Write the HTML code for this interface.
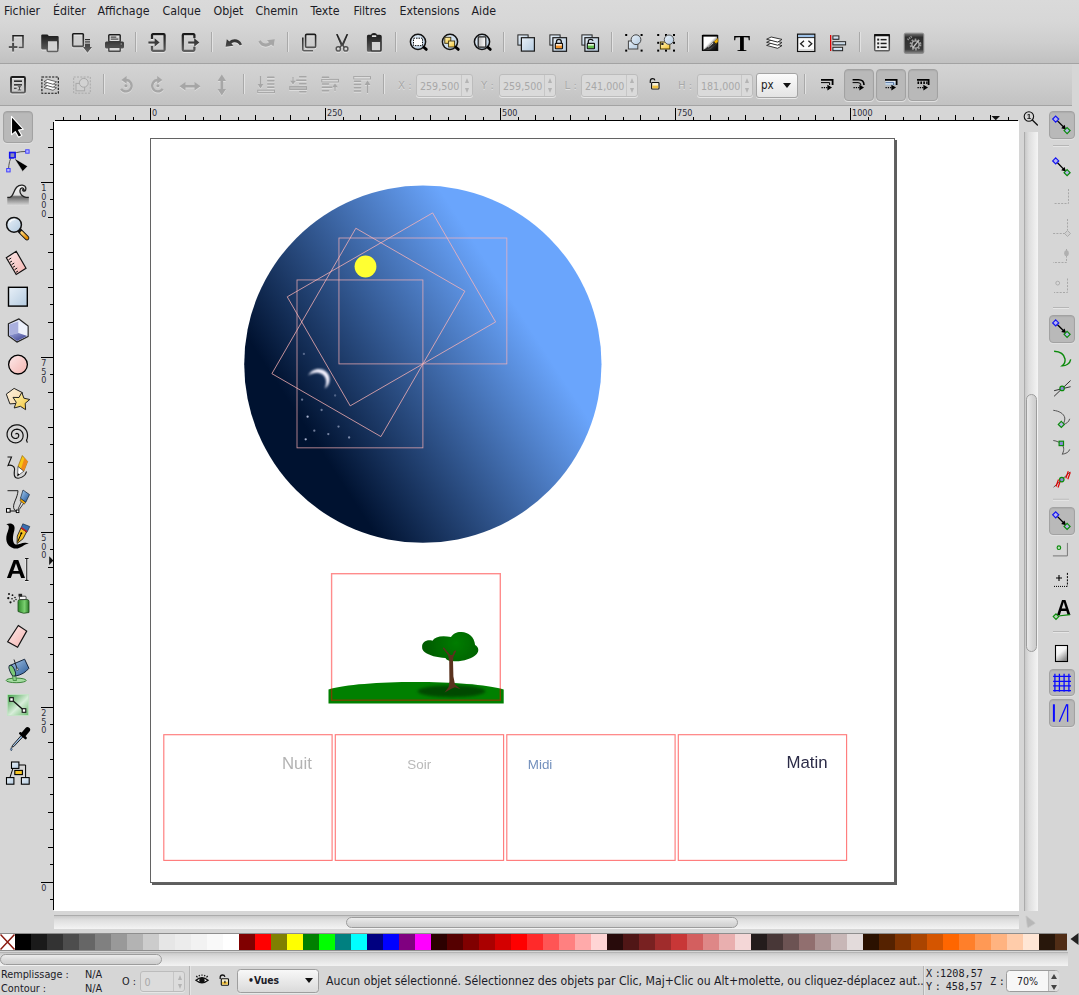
<!DOCTYPE html>
<html lang="fr"><head><meta charset="utf-8"><title>Inkscape</title>
<style>
html,body{margin:0;padding:0}
body{width:1079px;height:995px;overflow:hidden;background:#d6d6d6;position:relative;font-family:"DejaVu Sans Condensed","Liberation Sans","DejaVu Sans",sans-serif;font-size:13px;color:#1f1f2a}
.abs{position:absolute}
#menubar{position:absolute;left:0;top:0;width:1079px;height:22px}
#menubar span{position:absolute;top:2.8px;margin-left:-0.5px;line-height:16px;font-size:12.3px;white-space:nowrap;color:#1c1c26}
#tb1{position:absolute;left:0;top:0;width:1079px;height:63px;background:linear-gradient(#dadada,#d7d7d7 35%,#cecece 68%,#c1c1c1)}
#tb1b{position:absolute;left:0;top:63px;width:1079px;height:1px;background:#a3a3a3}
#tb2{position:absolute;left:0;top:64px;width:1072px;height:41px;background:linear-gradient(#d4d4d4,#cccccc 50%,#c2c2c2)}
#tb2b{position:absolute;left:0;top:105px;width:1072px;height:1px;background:#a3a3a3}
.sep{position:absolute;width:1px;height:20px;background:#a9a9a9;box-shadow:1px 0 0 #e2e2e2}
#canvas{position:absolute;left:54px;top:121px;width:965px;height:790px;background:#fff;overflow:hidden}
#hruler{position:absolute;left:54px;top:106px;width:965px;height:15px;overflow:hidden}
#vruler{position:absolute;left:40px;top:121px;width:14px;height:790px;overflow:hidden}
svg{position:absolute;overflow:visible}
</style></head>
<body>
<div id="tb1"></div><div id="tb1b"></div><div id="tb2"></div><div id="tb2b"></div>
<div id="menubar"><span style="left:4.5px">Fichier</span><span style="left:53.5px">Éditer</span><span style="left:98.0px">Affichage</span><span style="left:163.0px">Calque</span><span style="left:214.0px">Objet</span><span style="left:256.0px">Chemin</span><span style="left:311.0px">Texte</span><span style="left:354.0px">Filtres</span><span style="left:400.0px">Extensions</span><span style="left:472.0px">Aide</span></div>
<div class="sep" style="left:135px;top:32px"></div><div class="sep" style="left:211px;top:32px"></div><div class="sep" style="left:287px;top:32px"></div><div class="sep" style="left:395px;top:32px"></div><div class="sep" style="left:503px;top:32px"></div><div class="sep" style="left:611px;top:32px"></div><div class="sep" style="left:687px;top:32px"></div><div class="sep" style="left:859px;top:32px"></div><div class="sep" style="left:103px;top:74px"></div><div class="sep" style="left:243px;top:74px"></div><div class="sep" style="left:383px;top:74px"></div><div class="sep" style="left:804px;top:74px"></div>
<div id="hruler"><svg width="965" height="15" style="left:0;top:0"><rect x="1" y="14" width="963" height="1" fill="#000"/><rect x="9" y="11" width="1" height="3" fill="#000"/><rect x="26" y="9" width="1" height="5" fill="#000"/><rect x="44" y="11" width="1" height="3" fill="#000"/><rect x="61" y="9" width="1" height="5" fill="#000"/><rect x="79" y="11" width="1" height="3" fill="#000"/><rect x="96" y="2" width="1" height="12" fill="#000"/><rect x="114" y="11" width="1" height="3" fill="#000"/><rect x="131" y="9" width="1" height="5" fill="#000"/><rect x="149" y="11" width="1" height="3" fill="#000"/><rect x="166" y="9" width="1" height="5" fill="#000"/><rect x="184" y="11" width="1" height="3" fill="#000"/><rect x="201" y="9" width="1" height="5" fill="#000"/><rect x="219" y="11" width="1" height="3" fill="#000"/><rect x="236" y="9" width="1" height="5" fill="#000"/><rect x="254" y="11" width="1" height="3" fill="#000"/><rect x="271" y="2" width="1" height="12" fill="#000"/><rect x="289" y="11" width="1" height="3" fill="#000"/><rect x="306" y="9" width="1" height="5" fill="#000"/><rect x="324" y="11" width="1" height="3" fill="#000"/><rect x="341" y="9" width="1" height="5" fill="#000"/><rect x="359" y="11" width="1" height="3" fill="#000"/><rect x="376" y="9" width="1" height="5" fill="#000"/><rect x="394" y="11" width="1" height="3" fill="#000"/><rect x="411" y="9" width="1" height="5" fill="#000"/><rect x="429" y="11" width="1" height="3" fill="#000"/><rect x="446" y="2" width="1" height="12" fill="#000"/><rect x="464" y="11" width="1" height="3" fill="#000"/><rect x="481" y="9" width="1" height="5" fill="#000"/><rect x="499" y="11" width="1" height="3" fill="#000"/><rect x="516" y="9" width="1" height="5" fill="#000"/><rect x="534" y="11" width="1" height="3" fill="#000"/><rect x="551" y="9" width="1" height="5" fill="#000"/><rect x="569" y="11" width="1" height="3" fill="#000"/><rect x="586" y="9" width="1" height="5" fill="#000"/><rect x="604" y="11" width="1" height="3" fill="#000"/><rect x="621" y="2" width="1" height="12" fill="#000"/><rect x="639" y="11" width="1" height="3" fill="#000"/><rect x="656" y="9" width="1" height="5" fill="#000"/><rect x="674" y="11" width="1" height="3" fill="#000"/><rect x="691" y="9" width="1" height="5" fill="#000"/><rect x="709" y="11" width="1" height="3" fill="#000"/><rect x="726" y="9" width="1" height="5" fill="#000"/><rect x="744" y="11" width="1" height="3" fill="#000"/><rect x="761" y="9" width="1" height="5" fill="#000"/><rect x="779" y="11" width="1" height="3" fill="#000"/><rect x="796" y="2" width="1" height="12" fill="#000"/><rect x="814" y="11" width="1" height="3" fill="#000"/><rect x="831" y="9" width="1" height="5" fill="#000"/><rect x="849" y="11" width="1" height="3" fill="#000"/><rect x="866" y="9" width="1" height="5" fill="#000"/><rect x="884" y="11" width="1" height="3" fill="#000"/><rect x="901" y="9" width="1" height="5" fill="#000"/><rect x="919" y="11" width="1" height="3" fill="#000"/><rect x="936" y="9" width="1" height="5" fill="#000"/><rect x="954" y="11" width="1" height="3" fill="#000"/><text x="98" y="10.2" font-size="9" fill="#2e2e3a" font-family="DejaVu Sans Condensed,Liberation Sans,DejaVu Sans,sans-serif">0</text><text x="273" y="10.2" font-size="9" fill="#2e2e3a" font-family="DejaVu Sans Condensed,Liberation Sans,DejaVu Sans,sans-serif">250</text><text x="448" y="10.2" font-size="9" fill="#2e2e3a" font-family="DejaVu Sans Condensed,Liberation Sans,DejaVu Sans,sans-serif">500</text><text x="623" y="10.2" font-size="9" fill="#2e2e3a" font-family="DejaVu Sans Condensed,Liberation Sans,DejaVu Sans,sans-serif">750</text><text x="798" y="10.2" font-size="9" fill="#2e2e3a" font-family="DejaVu Sans Condensed,Liberation Sans,DejaVu Sans,sans-serif">1000</text><path d="M937.5 10H946L941.750 14.200Z" fill="#111"/></svg></div>
<div id="vruler"><svg width="14" height="790" style="left:0;top:0"><rect x="13" y="1" width="1" height="788" fill="#000"/><rect x="10" y="778" width="3" height="1" fill="#000"/><rect x="1" y="761" width="12" height="1" fill="#000"/><rect x="10" y="743" width="3" height="1" fill="#000"/><rect x="8" y="726" width="5" height="1" fill="#000"/><rect x="10" y="708" width="3" height="1" fill="#000"/><rect x="8" y="691" width="5" height="1" fill="#000"/><rect x="10" y="673" width="3" height="1" fill="#000"/><rect x="8" y="656" width="5" height="1" fill="#000"/><rect x="10" y="638" width="3" height="1" fill="#000"/><rect x="8" y="621" width="5" height="1" fill="#000"/><rect x="10" y="603" width="3" height="1" fill="#000"/><rect x="1" y="586" width="12" height="1" fill="#000"/><rect x="10" y="568" width="3" height="1" fill="#000"/><rect x="8" y="551" width="5" height="1" fill="#000"/><rect x="10" y="533" width="3" height="1" fill="#000"/><rect x="8" y="516" width="5" height="1" fill="#000"/><rect x="10" y="498" width="3" height="1" fill="#000"/><rect x="8" y="481" width="5" height="1" fill="#000"/><rect x="10" y="463" width="3" height="1" fill="#000"/><rect x="8" y="446" width="5" height="1" fill="#000"/><rect x="10" y="428" width="3" height="1" fill="#000"/><rect x="1" y="411" width="12" height="1" fill="#000"/><rect x="10" y="393" width="3" height="1" fill="#000"/><rect x="8" y="376" width="5" height="1" fill="#000"/><rect x="10" y="358" width="3" height="1" fill="#000"/><rect x="8" y="341" width="5" height="1" fill="#000"/><rect x="10" y="323" width="3" height="1" fill="#000"/><rect x="8" y="306" width="5" height="1" fill="#000"/><rect x="10" y="288" width="3" height="1" fill="#000"/><rect x="8" y="271" width="5" height="1" fill="#000"/><rect x="10" y="253" width="3" height="1" fill="#000"/><rect x="1" y="236" width="12" height="1" fill="#000"/><rect x="10" y="218" width="3" height="1" fill="#000"/><rect x="8" y="201" width="5" height="1" fill="#000"/><rect x="10" y="183" width="3" height="1" fill="#000"/><rect x="8" y="166" width="5" height="1" fill="#000"/><rect x="10" y="148" width="3" height="1" fill="#000"/><rect x="8" y="131" width="5" height="1" fill="#000"/><rect x="10" y="113" width="3" height="1" fill="#000"/><rect x="8" y="96" width="5" height="1" fill="#000"/><rect x="10" y="78" width="3" height="1" fill="#000"/><rect x="1" y="61" width="12" height="1" fill="#000"/><rect x="10" y="43" width="3" height="1" fill="#000"/><rect x="8" y="26" width="5" height="1" fill="#000"/><rect x="10" y="8" width="3" height="1" fill="#000"/><text x="1.2" y="769.6" font-size="9" fill="#2e2e3a" font-family="DejaVu Sans Condensed,Liberation Sans,DejaVu Sans,sans-serif">0</text><text x="1.2" y="594.6" font-size="9" fill="#2e2e3a" font-family="DejaVu Sans Condensed,Liberation Sans,DejaVu Sans,sans-serif">2</text><text x="1.2" y="603.5" font-size="9" fill="#2e2e3a" font-family="DejaVu Sans Condensed,Liberation Sans,DejaVu Sans,sans-serif">5</text><text x="1.2" y="612.4" font-size="9" fill="#2e2e3a" font-family="DejaVu Sans Condensed,Liberation Sans,DejaVu Sans,sans-serif">0</text><text x="1.2" y="419.6" font-size="9" fill="#2e2e3a" font-family="DejaVu Sans Condensed,Liberation Sans,DejaVu Sans,sans-serif">5</text><text x="1.2" y="428.5" font-size="9" fill="#2e2e3a" font-family="DejaVu Sans Condensed,Liberation Sans,DejaVu Sans,sans-serif">0</text><text x="1.2" y="437.4" font-size="9" fill="#2e2e3a" font-family="DejaVu Sans Condensed,Liberation Sans,DejaVu Sans,sans-serif">0</text><text x="1.2" y="244.6" font-size="9" fill="#2e2e3a" font-family="DejaVu Sans Condensed,Liberation Sans,DejaVu Sans,sans-serif">7</text><text x="1.2" y="253.5" font-size="9" fill="#2e2e3a" font-family="DejaVu Sans Condensed,Liberation Sans,DejaVu Sans,sans-serif">5</text><text x="1.2" y="262.4" font-size="9" fill="#2e2e3a" font-family="DejaVu Sans Condensed,Liberation Sans,DejaVu Sans,sans-serif">0</text><text x="1.2" y="69.6" font-size="9" fill="#2e2e3a" font-family="DejaVu Sans Condensed,Liberation Sans,DejaVu Sans,sans-serif">1</text><text x="1.2" y="78.5" font-size="9" fill="#2e2e3a" font-family="DejaVu Sans Condensed,Liberation Sans,DejaVu Sans,sans-serif">0</text><text x="1.2" y="87.4" font-size="9" fill="#2e2e3a" font-family="DejaVu Sans Condensed,Liberation Sans,DejaVu Sans,sans-serif">0</text><text x="1.2" y="96.3" font-size="9" fill="#2e2e3a" font-family="DejaVu Sans Condensed,Liberation Sans,DejaVu Sans,sans-serif">0</text><path d="M9.200 435.200L13.400 439.600L9.200 444Z" fill="#111"/></svg></div>
<div id="canvas"><svg width="965" height="790" style="left:0;top:0" viewBox="54 121 965 790">
<defs>
<linearGradient id="sky" gradientUnits="userSpaceOnUse" x1="311.6" y1="436.4" x2="514.6" y2="304.5"><stop offset="0" stop-color="#001230"/><stop offset="1" stop-color="#6aa5fc"/></linearGradient>
<filter id="b1" x="-30%" y="-30%" width="160%" height="160%"><feGaussianBlur stdDeviation="0.7"/></filter>
<filter id="b2" x="-30%" y="-30%" width="160%" height="160%"><feGaussianBlur stdDeviation="0.95"/></filter>
<filter id="b05" x="-50%" y="-50%" width="200%" height="200%"><feGaussianBlur stdDeviation="0.5"/></filter>
<filter id="b3" x="-30%" y="-60%" width="160%" height="220%"><feGaussianBlur stdDeviation="1.6"/></filter>
<radialGradient id="crown" gradientUnits="userSpaceOnUse" cx="456" cy="643" r="30"><stop offset="0" stop-color="#007c00"/><stop offset="1" stop-color="#005c00"/></radialGradient>
</defs>
<rect x="152" y="883" width="745" height="2" fill="#5e5e5e"/><rect x="895" y="140" width="2" height="745" fill="#5e5e5e"/>
<rect x="150.5" y="138.5" width="744" height="744" fill="#fff" stroke="#636363" stroke-width="1"/>
<circle cx="422.85" cy="364.2" r="178.65" fill="url(#sky)"/>
<rect x="338.95" y="238.00" width="167.90" height="125.90" fill="none" stroke="#ffb4b6" stroke-opacity="0.8" stroke-width="0.85" transform="rotate(0 422.90 363.90)"/>
<rect x="338.95" y="238.00" width="167.90" height="125.90" fill="none" stroke="#ffb4b6" stroke-opacity="0.8" stroke-width="0.85" transform="rotate(-30 422.90 363.90)"/>
<rect x="338.95" y="238.00" width="167.90" height="125.90" fill="none" stroke="#ffb4b6" stroke-opacity="0.8" stroke-width="0.85" transform="rotate(-60 422.90 363.90)"/>
<rect x="338.95" y="238.00" width="167.90" height="125.90" fill="none" stroke="#ffb4b6" stroke-opacity="0.8" stroke-width="0.85" transform="rotate(-90 422.90 363.90)"/>
<circle cx="365.5" cy="266.5" r="10.9" fill="#ffff33" filter="url(#b05)"/>
<path d="M308.2 375.6 C311 369.5 320 366.5 326 371.5 C331.5 376 330.5 385 324.8 388.6 C327.2 383 326.6 377.600 322.600 374.600 C318.5 371.8 312.5 372.6 308.2 375.6 Z" fill="#f4f2ff" filter="url(#b2)"/>
<circle cx="303.9" cy="353.9" r="1.15" fill="#dfe4ff" fill-opacity="0.34" filter="url(#b05)"/>
<circle cx="335.1" cy="395.5" r="1.15" fill="#dfe4ff" fill-opacity="0.30" filter="url(#b05)"/>
<circle cx="302.1" cy="399.7" r="1.15" fill="#dfe4ff" fill-opacity="0.45" filter="url(#b05)"/>
<circle cx="321.6" cy="410.0" r="1.15" fill="#dfe4ff" fill-opacity="0.45" filter="url(#b05)"/>
<circle cx="307.6" cy="416.7" r="1.15" fill="#dfe4ff" fill-opacity="0.75" filter="url(#b05)"/>
<circle cx="338.5" cy="426.6" r="1.15" fill="#dfe4ff" fill-opacity="0.49" filter="url(#b05)"/>
<circle cx="314.3" cy="430.7" r="1.15" fill="#dfe4ff" fill-opacity="0.49" filter="url(#b05)"/>
<circle cx="328.3" cy="434.1" r="1.15" fill="#dfe4ff" fill-opacity="0.52" filter="url(#b05)"/>
<circle cx="349.1" cy="437.5" r="1.15" fill="#dfe4ff" fill-opacity="0.52" filter="url(#b05)"/>
<circle cx="305.7" cy="439.3" r="1.15" fill="#dfe4ff" fill-opacity="0.75" filter="url(#b05)"/>
<path d="M328.5 703.5 L328.5 689.5 C360 679.5 470 679.5 503.7 689.5 L503.7 703.5 Z" fill="#008000" filter="url(#b1)"/>
<ellipse cx="451.5" cy="691.3" rx="34" ry="6" fill="#004a00" filter="url(#b3)"/>
<path d="M443.4 648.3 L448.8 654.9 L452.6 654.9 L454 651.2 L455.6 651 L453.4 655.2 L453 660.4 L453.4 676.5 L455 684.5 L460.6 689.3 L455 687.3 L451.8 688.5 L444.6 692.5 L448.6 686.9 L449.4 681.3 L449.2 660.4 L448.2 655.2 Z" fill="#5a321e"/>
<path d="M422.1 646.7 C422 642 427 639 432.5 640.7 C435 637 441 635.2 451 637.1 C453 633.5 458 631.6 461.4 632.1 C468 632 474.5 637 475.1 645.1 C478.5 646.5 479.5 651.5 476.7 653.9 C473 658.5 462 661.5 455 661.2 C450 661.3 446.5 660.5 445.4 658 C437 657.5 429 655.5 424.5 652 C422.6 650.5 422 648.5 422.1 646.7 Z" fill="url(#crown)" filter="url(#b05)"/>
<path d="M443.4 648.3 L448.8 654.9 L452.6 654.9 L454 651.2 L455.6 651 L453.4 655.2 L453 661 L449.2 661 L448.2 655.2 Z" fill="#5a321e"/>
<path d="M443.6 648.3L449.8 655.8M455.3 651.2L452.7 656.4" stroke="#5a321e" stroke-width="1.5" stroke-linecap="round" fill="none"/>
<rect x="331.6" y="573.7" width="168.7" height="126.5" fill="none" stroke="#ff0000" stroke-opacity="0.45" stroke-width="1.4"/>
<rect x="163.8" y="734.7" width="168.3" height="125.7" fill="none" stroke="#ff0000" stroke-opacity="0.52" stroke-width="1.15"/>
<rect x="335.3" y="734.7" width="168.3" height="125.7" fill="none" stroke="#ff0000" stroke-opacity="0.52" stroke-width="1.15"/>
<rect x="506.8" y="734.7" width="168.3" height="125.7" fill="none" stroke="#ff0000" stroke-opacity="0.52" stroke-width="1.15"/>
<rect x="678.3" y="734.7" width="168.3" height="125.7" fill="none" stroke="#ff0000" stroke-opacity="0.52" stroke-width="1.15"/>
<g opacity=".999">
<text x="311.8" y="768.6" text-anchor="end" font-size="16.8" fill="#b3b3b3" font-family="Liberation Sans,Arial,sans-serif">Nuit</text>
<text x="407.3" y="768.5" font-size="13.4" fill="#b9b9b9" font-family="Liberation Sans,Arial,sans-serif">Soir</text>
<text x="527.8" y="768.5" font-size="13.4" fill="#7390bd" font-family="Liberation Sans,Arial,sans-serif">Midi</text>
<text x="827.6" y="768.4" text-anchor="end" font-size="16.8" fill="#2b2b47" font-family="Liberation Sans,Arial,sans-serif">Matin</text>
</g>
</svg></div>
<svg width="0" height="0" style="left:0;top:0"><defs>
<linearGradient id="sym" gradientUnits="userSpaceOnUse" x1="0" y1="1" x2="0" y2="21"><stop offset="0" stop-color="#141414"/><stop offset="1" stop-color="#686868"/></linearGradient>
<linearGradient id="lb" x1="0" y1="0" x2="1" y2="1"><stop offset="0" stop-color="#e8f0f8"/><stop offset="1" stop-color="#b4cbe0"/></linearGradient>
<linearGradient id="lbv" x1="0" y1="0" x2="0" y2="1"><stop offset="0" stop-color="#f4f8fc"/><stop offset="1" stop-color="#a9c4dd"/></linearGradient>
<linearGradient id="pk" x1="0" y1="0" x2="1" y2="1"><stop offset="0" stop-color="#fdeaea"/><stop offset="1" stop-color="#f4b4b0"/></linearGradient>
<linearGradient id="yl" x1="0" y1="0" x2="1" y2="1"><stop offset="0" stop-color="#fff6c0"/><stop offset="1" stop-color="#f2c230"/></linearGradient>
<linearGradient id="pg" x1="0" y1="0" x2="1" y2="0"><stop offset="0" stop-color="#b8b8b8"/><stop offset="1" stop-color="#ffffff"/></linearGradient>
<linearGradient id="gr" x1="0" y1="0" x2="1" y2="1"><stop offset="0" stop-color="#e4f2e0"/><stop offset="1" stop-color="#3f9a3a"/></linearGradient>
</defs></svg>
<svg style="left:7px;top:32px" width="22" height="24" viewBox="0 0 22 24"><g transform="translate(0,1)" fill="#fff" stroke="#fff" opacity="0.55"><path d="M6 9.5V3.75H16V15.6H11.8" fill="none" stroke-width="1.5"/><rect x="1.8" y="14.1" width="8.6" height="2" stroke="none"/><rect x="5.1" y="10.8" width="2" height="8.8" stroke="none"/></g><g fill="url(#sym)" stroke="url(#sym)"><path d="M6 9.5V3.75H16V15.6H11.8" fill="none" stroke-width="1.5"/><rect x="1.8" y="14.1" width="8.6" height="2" stroke="none"/><rect x="5.1" y="10.8" width="2" height="8.8" stroke="none"/></g></svg>
<svg style="left:39px;top:32px" width="22" height="24" viewBox="0 0 22 24"><g transform="translate(0,1)" fill="#fff" stroke="#fff" opacity="0.55"><path d="M2.2 3.600Q2.2 2.400 3.4 2.400H8Q9 2.400 9.3 3.200L9.6 4H18.4Q19.7 4 19.7 5.3V16.3Q19.7 17.6 18.4 17.6H3.5Q2.2 17.6 2.2 16.3Z" stroke="none"/></g><g fill="url(#sym)" stroke="url(#sym)"><path d="M2.2 3.600Q2.2 2.400 3.4 2.400H8Q9 2.400 9.3 3.200L9.6 4H18.4Q19.7 4 19.7 5.3V16.3Q19.7 17.6 18.4 17.6H3.5Q2.2 17.6 2.2 16.3Z" stroke="none"/></g></svg>
<svg style="left:39px;top:32px" width="22" height="24" viewBox="0 0 22 24"><rect x="8.2" y="9.3" width="10.6" height="11" rx="1" fill="#e9e9e9" opacity=".6"/><rect x="8.2" y="8.5" width="10.6" height="11" rx="1" fill="#d2d2d2" stroke="url(#sym)" stroke-width="1.5"/></svg>
<svg style="left:71px;top:32px" width="22" height="24" viewBox="0 0 22 24"><g transform="translate(0,1)" fill="#fff" stroke="#fff" opacity="0.55"><rect x="1.7" y="1.8" width="10.6" height="12.6" rx=".8" fill="none" stroke-width="1.6"/><rect x="14" y="7" width="5" height="1.3" stroke="none"/><rect x="14" y="9.3" width="5" height="1.3" stroke="none"/><rect x="14" y="11.6" width="5" height="3.6" stroke="none"/><path d="M12 15H21L16.5 20.8Z" stroke="none"/></g><g fill="url(#sym)" stroke="url(#sym)"><rect x="1.7" y="1.8" width="10.6" height="12.6" rx=".8" fill="none" stroke-width="1.6"/><rect x="14" y="7" width="5" height="1.3" stroke="none"/><rect x="14" y="9.3" width="5" height="1.3" stroke="none"/><rect x="14" y="11.6" width="5" height="3.6" stroke="none"/><path d="M12 15H21L16.5 20.8Z" stroke="none"/></g></svg>
<svg style="left:103px;top:32px" width="22" height="24" viewBox="0 0 22 24"><g transform="translate(0,1)" fill="#fff" stroke="#fff" opacity="0.55"><rect x="5.8" y="2.7" width="11.4" height="7" rx=".8" fill="none" stroke-width="1.5"/><rect x="7.8" y="4.6" width="5.5" height="1" stroke="none"/><rect x="7.8" y="6.6" width="7.5" height="1" stroke="none"/><path d="M3.5 9.5H19.5Q21 9.500 21 11V15Q21 16.500 19.500 16.500H3.500Q2 16.500 2 15V11Q2 9.500 3.500 9.500Z" stroke="none"/></g><g fill="url(#sym)" stroke="url(#sym)"><rect x="5.8" y="2.7" width="11.4" height="7" rx=".8" fill="none" stroke-width="1.5"/><rect x="7.8" y="4.6" width="5.5" height="1" stroke="none"/><rect x="7.8" y="6.6" width="7.5" height="1" stroke="none"/><path d="M3.5 9.5H19.5Q21 9.500 21 11V15Q21 16.500 19.500 16.500H3.500Q2 16.500 2 15V11Q2 9.500 3.500 9.500Z" stroke="none"/></g></svg>
<svg style="left:103px;top:32px" width="22" height="24" viewBox="0 0 22 24"><rect x="5.8" y="15.3" width="11.4" height="4" rx=".6" fill="#d8d8d8" stroke="#4a4a4a" stroke-width="1.4"/><rect x="17.6" y="11.4" width="1.4" height="1.2" fill="#9a9a9a"/></svg>
<svg style="left:147px;top:32px" width="22" height="24" viewBox="0 0 22 24"><g transform="translate(0,1)" fill="#fff" stroke="#fff" opacity="0.55"><path d="M5 7V3.200Q5 2.200 6 2.200H16.6Q17.6 2.200 17.6 3.200V17.800Q17.6 18.800 16.600 18.800H6Q5 18.800 5 17.800V14" fill="none" stroke-width="2.3"/><rect x="1.400" y="9.500" width="7" height="2.100" stroke="none"/><path d="M7.600 6.300L12.600 10.500L7.600 14.800Z" stroke="none"/></g><g fill="url(#sym)" stroke="url(#sym)"><path d="M5 7V3.200Q5 2.200 6 2.200H16.6Q17.6 2.200 17.6 3.200V17.800Q17.6 18.800 16.600 18.800H6Q5 18.800 5 17.800V14" fill="none" stroke-width="2.3"/><rect x="1.400" y="9.500" width="7" height="2.100" stroke="none"/><path d="M7.600 6.300L12.600 10.500L7.600 14.800Z" stroke="none"/></g></svg>
<svg style="left:179px;top:32px" width="22" height="24" viewBox="0 0 22 24"><g transform="translate(0,1)" fill="#fff" stroke="#fff" opacity="0.55"><path d="M15.400 6.300V3.200Q15.400 2.200 14.400 2.200H4.800Q3.800 2.200 3.800 3.200V17.800Q3.800 18.800 4.800 18.800H14.400Q15.400 18.800 15.400 17.800V14.700" fill="none" stroke-width="2.3"/><rect x="9.200" y="9.500" width="7" height="2.100" stroke="none"/><path d="M15.200 6.300L20.400 10.500L15.200 14.800Z" stroke="none"/></g><g fill="url(#sym)" stroke="url(#sym)"><path d="M15.400 6.300V3.200Q15.400 2.200 14.400 2.200H4.800Q3.800 2.200 3.800 3.200V17.800Q3.800 18.800 4.800 18.800H14.400Q15.400 18.800 15.400 17.800V14.700" fill="none" stroke-width="2.3"/><rect x="9.200" y="9.500" width="7" height="2.100" stroke="none"/><path d="M15.200 6.300L20.400 10.500L15.200 14.800Z" stroke="none"/></g></svg>
<svg style="left:223px;top:32px" width="22" height="24" viewBox="0 0 22 24"><g transform="translate(0,1)" fill="#fff" stroke="#fff" opacity="0.55"><path d="M2.600 14.700L3.800 7.300L6.300 9.400C10 6 16.500 6.400 19 12.400L16.800 13.600C14.500 9.800 10.800 9.600 8.400 11.600L10.400 13.700Z" stroke="none"/></g><g fill="url(#sym)" stroke="url(#sym)"><path d="M2.600 14.700L3.800 7.300L6.300 9.400C10 6 16.500 6.400 19 12.400L16.800 13.600C14.500 9.800 10.800 9.600 8.400 11.600L10.400 13.700Z" stroke="none"/></g></svg>
<svg style="left:255px;top:32px" width="22" height="24" viewBox="0 0 22 24"><g transform="translate(0,1)" fill="#e6e6e6" stroke="#e6e6e6" opacity="0.7"><path d="M19.800 7.200L18.600 14.600L16.100 12.500C12.400 15.900 5.900 15.500 3.400 9.500L5.600 8.300C7.900 12.100 11.600 12.300 14 10.300L12 8.200Z" stroke="none"/></g><g fill="#a6a6a6" stroke="#a6a6a6"><path d="M19.800 7.200L18.600 14.600L16.100 12.500C12.400 15.900 5.900 15.500 3.400 9.500L5.600 8.300C7.900 12.100 11.600 12.300 14 10.300L12 8.200Z" stroke="none"/></g></svg>
<svg style="left:299px;top:32px" width="22" height="24" viewBox="0 0 22 24"><g transform="translate(0,1)" fill="#fff" stroke="#fff" opacity="0.55"><rect x="6.600" y="2.400" width="10" height="13" rx="1.200" fill="none" stroke-width="1.600"/><path d="M3.800 5.500V17.600Q3.800 18.800 5 18.800H14" fill="none" stroke-width="1.600"/></g><g fill="url(#sym)" stroke="url(#sym)"><rect x="6.600" y="2.400" width="10" height="13" rx="1.200" fill="none" stroke-width="1.600"/><path d="M3.800 5.500V17.600Q3.800 18.800 5 18.800H14" fill="none" stroke-width="1.600"/></g></svg>
<svg style="left:331px;top:32px" width="22" height="24" viewBox="0 0 22 24"><g transform="translate(0,1)" fill="#fff" stroke="#fff" opacity="0.55"><path d="M5 2.300L6.600 2L11.200 11.200L15.600 2L17.200 2.300L12.700 13.300L14.200 15.400L12.600 16L11.100 13.800L9.600 16L8 15.400L9.600 13.300Z" stroke="none"/><circle cx="7.300" cy="16.900" r="2.100" fill="none" stroke-width="1.500"/><circle cx="14.800" cy="16.900" r="2.100" fill="none" stroke-width="1.500"/></g><g fill="url(#sym)" stroke="url(#sym)"><path d="M5 2.300L6.600 2L11.200 11.200L15.600 2L17.200 2.300L12.700 13.300L14.200 15.400L12.600 16L11.100 13.800L9.600 16L8 15.400L9.600 13.300Z" stroke="none"/><circle cx="7.300" cy="16.900" r="2.100" fill="none" stroke-width="1.500"/><circle cx="14.800" cy="16.900" r="2.100" fill="none" stroke-width="1.500"/></g></svg>
<svg style="left:363px;top:32px" width="22" height="24" viewBox="0 0 22 24"><g transform="translate(0,1)" fill="#fff" stroke="#fff" opacity="0.55"><path d="M5.200 2.800H8Q8.300 1 11 1Q13.700 1 14 2.800H16.800Q18.800 2.800 18.800 4.800V18.400Q18.800 19.700 17.500 19.700H5.200Q3.900 19.700 3.900 18.400V4.800Q3.900 2.800 5.200 2.800Z" stroke="none"/></g><g fill="url(#sym)" stroke="url(#sym)"><path d="M5.200 2.800H8Q8.300 1 11 1Q13.700 1 14 2.800H16.800Q18.800 2.800 18.800 4.800V18.400Q18.800 19.700 17.500 19.700H5.200Q3.900 19.700 3.900 18.400V4.800Q3.900 2.800 5.200 2.800Z" stroke="none"/></g></svg>
<svg style="left:363px;top:32px" width="22" height="24" viewBox="0 0 22 24"><rect x="8.900" y="3.300" width="4.400" height="1.700" rx=".6" fill="#e0e0e0"/><rect x="8.200" y="9.300" width="9.600" height="9.600" rx=".8" fill="#d4d4d4" stroke="#3a3a3a" stroke-width="1.300"/></svg>
<svg style="left:407px;top:32px" width="24" height="24" viewBox="0 0 24 24"><circle cx="11" cy="9.800" r="7.600" fill="url(#lb)" stroke="#111" stroke-width="1.500"/><rect x="6.500" y="6.200" width="9" height="7.400" fill="#fff" stroke="#111" stroke-width="1" stroke-dasharray="1.500 1"/><path d="M16.800 15.200L19.300 17.400" stroke="#000" stroke-width="2.800" stroke-linecap="round"/></svg>
<svg style="left:439px;top:32px" width="24" height="24" viewBox="0 0 24 24"><circle cx="11" cy="9.800" r="7.600" fill="url(#lb)" stroke="#111" stroke-width="1.500"/><rect x="5.800" y="5.300" width="6" height="6" fill="url(#yl)" stroke="#3a3010" stroke-width=".9"/><rect x="9.600" y="9" width="6" height="6" fill="url(#yl)" stroke="#3a3010" stroke-width=".9"/><path d="M16.800 15.200L19.300 17.400" stroke="#000" stroke-width="2.800" stroke-linecap="round"/></svg>
<svg style="left:471px;top:32px" width="24" height="24" viewBox="0 0 24 24"><circle cx="11" cy="9.800" r="7.600" fill="url(#lb)" stroke="#111" stroke-width="1.500"/><rect x="7.200" y="4.800" width="7.600" height="10.400" rx=".6" fill="url(#pg)" stroke="#222" stroke-width="1.200"/><path d="M16.800 15.200L19.300 17.400" stroke="#000" stroke-width="2.800" stroke-linecap="round"/></svg>
<svg style="left:515px;top:32px" width="22" height="24" viewBox="0 0 22 24"><rect x="2.900" y="2.900" width="10.200" height="10.200" fill="url(#lb)" stroke="#222" stroke-width="1"/><rect x="6.400" y="5.700" width="13" height="13.400" fill="url(#lb)" stroke="#1a1a1a" stroke-width="1.200"/></svg>
<svg style="left:546.5px;top:32px" width="22" height="24" viewBox="0 0 22 24"><rect x="2.900" y="2.900" width="10.200" height="10.200" fill="url(#lb)" stroke="#222" stroke-width="1"/><rect x="5.900" y="5.700" width="13.600" height="13.600" fill="url(#lb)" stroke="#1a1a1a" stroke-width="1.200"/><path d="M9.500 11.600V9.600Q9.500 7.300 11.900 7.300Q14.300 7.300 14.300 9.600V11.600" fill="none" stroke="#111" stroke-width="1.300"/><rect x="8.300" y="11.400" width="7.200" height="5.400" rx=".6" fill="#f0922a" stroke="#111" stroke-width="1.100"/><rect x="9" y="12" width="5.800" height="1.600" fill="#fff" opacity=".8"/></svg>
<svg style="left:579px;top:32px" width="22" height="24" viewBox="0 0 22 24"><rect x="2.900" y="2.900" width="10.200" height="10.200" fill="url(#lb)" stroke="#222" stroke-width="1"/><rect x="5.900" y="5.700" width="13.600" height="13.600" fill="url(#lb)" stroke="#1a1a1a" stroke-width="1.200"/><path d="M9.300 11.600V9.400Q9.300 7.300 11.600 7.300Q13.600 7.300 14.100 8.800" fill="none" stroke="#111" stroke-width="1.300"/><rect x="8.300" y="11.400" width="7.200" height="5.400" rx=".6" fill="#5fbf4a" stroke="#111" stroke-width="1.100"/><rect x="9" y="12" width="5.800" height="1.600" fill="#fff" opacity=".8"/></svg>
<svg style="left:623px;top:32px" width="24" height="24" viewBox="0 0 24 24"><rect x="2.2" y="2" width="2" height="2" fill="#000"/><rect x="17.6" y="2" width="2" height="2" fill="#000"/><rect x="2.2" y="17.6" width="2" height="2" fill="#000"/><rect x="17.6" y="17.6" width="2" height="2" fill="#000"/><rect x="5.400" y="9" width="9.400" height="8" fill="url(#lb)" stroke="#444" stroke-width="1"/><circle cx="13" cy="7.700" r="4.900" fill="url(#lb)" stroke="#444" stroke-width="1"/></svg>
<svg style="left:655px;top:32px" width="24" height="24" viewBox="0 0 24 24"><rect x="2.2" y="2" width="2" height="2" fill="#000"/><rect x="18" y="2" width="2" height="2" fill="#000"/><rect x="2.2" y="17.6" width="2" height="2" fill="#000"/><rect x="18" y="17.6" width="2" height="2" fill="#000"/><rect x="10" y="2" width="2" height="2" fill="#000"/><rect x="2.2" y="9.8" width="2" height="2" fill="#000"/><rect x="18" y="9.8" width="2" height="2" fill="#000"/><rect x="10" y="17.6" width="2" height="2" fill="#000"/><rect x="5.400" y="10" width="9.400" height="7" fill="url(#yl)" stroke="#4a3c00" stroke-width="1"/><circle cx="14" cy="7.700" r="4.700" fill="url(#lb)" stroke="#555" stroke-width="1"/><rect x="6.300" y="10.800" width="2.200" height="2.200" fill="#222"/></svg>
<svg style="left:699px;top:32px" width="22" height="24" viewBox="0 0 22 24"><defs><linearGradient id="fs" x1="0" y1="0" x2="1" y2="1"><stop offset="0" stop-color="#fff"/><stop offset=".45" stop-color="#fff"/><stop offset=".75" stop-color="#222"/><stop offset="1" stop-color="#000"/></linearGradient></defs><path d="M3.600 3.600H18.600V18.400H3.600Z" fill="url(#fs)" stroke="#111" stroke-width="1.300"/><path d="M3.600 3.600H18.600" stroke="#000" stroke-width="1.800"/><path d="M3.600 3V18.400" stroke="#000" stroke-width="1.400"/><path d="M18.800 6.200L14.600 10.200L16.300 12L19 9.800Z" fill="#f5b400" stroke="#8a6400" stroke-width=".5"/><path d="M15 9.800L8.400 15.400L5 18.200L9.600 16.800L16.700 11.700Z" fill="#333" stroke="#111" stroke-width=".6"/><path d="M14.200 10.900L9 15.200" stroke="#eee" stroke-width=".8"/></svg>
<div class="abs" style="left:732px;top:31.500px;width:20px;height:24px;font-family:'Liberation Serif','DejaVu Serif',serif;font-weight:bold;font-size:23px;line-height:24px;color:#000;text-align:center;opacity:.999;transform:scaleX(1.07)">T</div>
<svg style="left:763px;top:32px" width="22" height="24" viewBox="0 0 22 24"><g stroke="#222" stroke-width=".9" fill="#fff"><path d="M3.600 13.400L8.200 11.200L19 13.600L14.600 16.300Z"/><path d="M3.600 10.300L8.200 8.100L19 10.500L14.600 13.200Z"/><path d="M3.600 7.200L8.200 5L19 7.400L14.600 10.100Z"/></g></svg>
<svg style="left:795px;top:32px" width="22" height="24" viewBox="0 0 22 24"><rect x="2.600" y="2.200" width="17.200" height="17.200" fill="#fbfbfb" stroke="#111" stroke-width="1.300"/><rect x="3.300" y="2.900" width="15.800" height="2.300" fill="#9fc3ea"/><path d="M2.600 5.600H19.800" stroke="#111" stroke-width=".9"/><path d="M9 8.800L5.600 11.800L9 14.800M13.400 8.800L16.800 11.800L13.400 14.800" fill="none" stroke="#222" stroke-width="1.300"/><rect x="3.300" y="17" width="15.800" height="1.700" fill="#ddd"/></svg>
<svg style="left:827px;top:32px" width="22" height="24" viewBox="0 0 22 24"><rect x="3" y="3" width="1.300" height="16" fill="#e00000"/><g fill="url(#lbv)" stroke="#222" stroke-width="1"><rect x="5.900" y="3.900" width="6" height="3.400"/><rect x="5.900" y="9.700" width="12.700" height="3.200"/><rect x="5.900" y="15.300" width="9.700" height="3.400"/></g></svg>
<svg style="left:871px;top:32px" width="22" height="24" viewBox="0 0 22 24"><rect x="3.700" y="2.800" width="14.600" height="16" rx="1" fill="#f2f2f2" stroke="url(#sym)" stroke-width="1.500"/><rect x="3" y="2" width="16" height="2.300" rx="1" fill="#111"/><g fill="#222"><rect x="6.200" y="6.600" width="2" height="2"/><rect x="9.600" y="6.900" width="6" height="1.500"/><rect x="6.200" y="10.400" width="2" height="2"/><rect x="9.600" y="10.700" width="6" height="1.500"/><rect x="6.200" y="14.200" width="2" height="2"/><rect x="9.600" y="14.500" width="6" height="1.500"/></g></svg>
<svg style="left:903px;top:32px" width="24" height="24" viewBox="0 0 24 24"><defs><linearGradient id="dp" x1="0" y1="0" x2="0" y2="1"><stop offset="0" stop-color="#7a7a7a"/><stop offset=".2" stop-color="#2e2e2e"/><stop offset=".8" stop-color="#3a3a3a"/><stop offset="1" stop-color="#8a8a8a"/></linearGradient></defs><rect x="1.200" y="1.200" width="19.600" height="20.200" rx="1.500" fill="url(#dp)" stroke="#8c8c8c" stroke-width="1"/><circle cx="12.500" cy="12.500" r="4.600" fill="none" stroke="#9a9a9a" stroke-width="2.600" stroke-dasharray="1.600 1.300"/><circle cx="12.500" cy="12.500" r="3.600" fill="none" stroke="#a8a8a8" stroke-width="1.400"/><path d="M4.600 7.800L9.200 4.200" stroke="#999" stroke-width="2" stroke-dasharray="1.200 .8"/><path d="M9.600 16L15.600 8.600" stroke="#c8c8c8" stroke-width="1.200"/></svg>
<svg style="left:7px;top:74px" width="22" height="24" viewBox="0 0 22 24"><g transform="translate(0,1)" fill="#fff" stroke="#fff" opacity="0.55"><rect x="4" y="3" width="14" height="15.600" rx="1.200" fill="none" stroke-width="1.900"/><rect x="7" y="6.400" width="8" height="1.700" stroke="none"/><rect x="7" y="10" width="8" height="1.700" stroke="none"/><rect x="7" y="13.700" width="2.600" height="1.500" stroke="none"/><path d="M10.800 12.800H14.200M10.800 16H14.200M12.500 12.800V16" fill="none" stroke-width="1"/></g><g fill="url(#sym)" stroke="url(#sym)"><rect x="4" y="3" width="14" height="15.600" rx="1.200" fill="none" stroke-width="1.900"/><rect x="7" y="6.400" width="8" height="1.700" stroke="none"/><rect x="7" y="10" width="8" height="1.700" stroke="none"/><rect x="7" y="13.700" width="2.600" height="1.500" stroke="none"/><path d="M10.800 12.800H14.200M10.800 16H14.200M12.500 12.800V16" fill="none" stroke-width="1"/></g></svg>
<svg style="left:39px;top:74px" width="22" height="24" viewBox="0 0 22 24"><rect x="2.900" y="3" width="16.400" height="16.200" fill="none" stroke="#111" stroke-width="1.100" stroke-dasharray="2.200 1.200"/><g stroke="#333" stroke-width=".7" fill="#fff"><path d="M5 13.600L8.600 11.400L17.600 13.800L14 16.300Z"/><path d="M5 10.600L8.600 8.400L17.600 10.800L14 13.300Z"/><path d="M5 7.600L8.600 5.400L17.600 7.800L14 10.300Z"/></g></svg>
<svg style="left:71px;top:74px" width="22" height="24" viewBox="0 0 22 24"><rect x="2.700" y="3" width="16.600" height="16.200" fill="none" stroke="#aaa" stroke-width="1" stroke-dasharray="2 1.300"/><rect x="5" y="9.400" width="8.600" height="7.400" fill="#cfcfcf" stroke="#a8a8a8" stroke-width="1"/><circle cx="12.800" cy="8.800" r="4.400" fill="#d2d2d2" stroke="#a8a8a8" stroke-width="1"/></svg>
<svg style="left:115px;top:74px" width="22" height="24" viewBox="0 0 22 24"><g transform="translate(0,1)" fill="#e6e6e6" stroke="#e6e6e6" opacity="0.7"><path d="M6.100 14.800A5.700 5.700 0 1 0 10.900 6" fill="none" stroke-width="2.300"/><path d="M11.600 2L6.400 6L11.600 9.800Z" stroke="none"/><circle cx="10.900" cy="11.700" r="1.500" stroke="none"/></g><g fill="#a6a6a6" stroke="#a6a6a6"><path d="M6.100 14.800A5.700 5.700 0 1 0 10.900 6" fill="none" stroke-width="2.300"/><path d="M11.600 2L6.400 6L11.600 9.800Z" stroke="none"/><circle cx="10.900" cy="11.700" r="1.500" stroke="none"/></g></svg>
<svg style="left:147px;top:74px" width="22" height="24" viewBox="0 0 22 24"><g transform="translate(0,1)" fill="#e6e6e6" stroke="#e6e6e6" opacity="0.7"><path d="M15.700 14.800A5.700 5.700 0 1 1 10.900 6" fill="none" stroke-width="2.300"/><path d="M10.200 2L15.400 6L10.200 9.800Z" stroke="none"/><circle cx="10.900" cy="11.700" r="1.500" stroke="none"/></g><g fill="#a6a6a6" stroke="#a6a6a6"><path d="M15.700 14.800A5.700 5.700 0 1 1 10.900 6" fill="none" stroke-width="2.300"/><path d="M10.200 2L15.400 6L10.200 9.800Z" stroke="none"/><circle cx="10.900" cy="11.700" r="1.500" stroke="none"/></g></svg>
<svg style="left:179px;top:74px" width="22" height="24" viewBox="0 0 22 24"><g transform="translate(0,1)" fill="#e6e6e6" stroke="#e6e6e6" opacity="0.7"><path d="M0.500 12.200L6.500 8V10.900H15.500V8L21.500 12.200L15.500 16.400V13.500H6.500V16.400Z" stroke="none"/></g><g fill="#a6a6a6" stroke="#a6a6a6"><path d="M0.500 12.200L6.500 8V10.900H15.500V8L21.500 12.200L15.500 16.400V13.500H6.500V16.400Z" stroke="none"/></g></svg>
<svg style="left:211px;top:72px" width="22" height="26" viewBox="0 0 22 26"><g transform="translate(0,1)" fill="#e6e6e6" stroke="#e6e6e6" opacity="0.7"><path d="M10.800 2.600L15 9H12.100V17H15L10.800 23.400L6.600 17H9.500V9H6.600Z" stroke="none"/></g><g fill="#a6a6a6" stroke="#a6a6a6"><path d="M10.800 2.600L15 9H12.100V17H15L10.800 23.400L6.600 17H9.500V9H6.600Z" stroke="none"/></g></svg>
<svg style="left:255px;top:74px" width="22" height="24" viewBox="0 0 22 24"><g transform="translate(0,1)" fill="#e6e6e6" stroke="#e6e6e6" opacity="0.7"><path d="M5.500 2V13" fill="none" stroke-width="1.200"/><path d="M2.600 10L5.500 14.600L8.400 10Z" stroke="none"/><rect x="12" y="2.6" width="7.6" height="1.500" rx=".7" stroke="none"/><rect x="12" y="5.9" width="7.6" height="1.500" rx=".7" stroke="none"/><rect x="12" y="9.2" width="7.6" height="1.500" rx=".7" stroke="none"/><rect x="12" y="12.5" width="7.6" height="1.500" rx=".7" stroke="none"/><rect x="2.700" y="16.200" width="16.800" height="2.400" fill="none" stroke-width="1"/></g><g fill="#a6a6a6" stroke="#a6a6a6"><path d="M5.500 2V13" fill="none" stroke-width="1.200"/><path d="M2.600 10L5.500 14.600L8.400 10Z" stroke="none"/><rect x="12" y="2.6" width="7.6" height="1.500" rx=".7" stroke="none"/><rect x="12" y="5.9" width="7.6" height="1.500" rx=".7" stroke="none"/><rect x="12" y="9.2" width="7.6" height="1.500" rx=".7" stroke="none"/><rect x="12" y="12.5" width="7.6" height="1.500" rx=".7" stroke="none"/><rect x="2.700" y="16.200" width="16.800" height="2.400" fill="none" stroke-width="1"/></g></svg>
<svg style="left:287px;top:74px" width="22" height="24" viewBox="0 0 22 24"><g transform="translate(0,1)" fill="#e6e6e6" stroke="#e6e6e6" opacity="0.7"><rect x="12" y="2.1" width="7.6" height="1.500" rx=".7" stroke="none"/><rect x="12" y="9.1" width="7.6" height="1.500" rx=".7" stroke="none"/><rect x="12" y="17" width="7.6" height="1.500" rx=".7" stroke="none"/><rect x="9" y="5.5" width="10.6" height="1.500" rx=".7" stroke="none"/><path d="M6 3V8.500" fill="none" stroke-width="1.100"/><path d="M3.200 6.800L6 10.400L8.800 6.800Z" stroke="none"/><rect x="2.700" y="12.600" width="16.800" height="2.900" fill-opacity=".55" stroke-width="1"/></g><g fill="#a6a6a6" stroke="#a6a6a6"><rect x="12" y="2.1" width="7.6" height="1.500" rx=".7" stroke="none"/><rect x="12" y="9.1" width="7.6" height="1.500" rx=".7" stroke="none"/><rect x="12" y="17" width="7.6" height="1.500" rx=".7" stroke="none"/><rect x="9" y="5.5" width="10.6" height="1.500" rx=".7" stroke="none"/><path d="M6 3V8.500" fill="none" stroke-width="1.100"/><path d="M3.200 6.800L6 10.400L8.800 6.800Z" stroke="none"/><rect x="2.700" y="12.600" width="16.800" height="2.900" fill-opacity=".55" stroke-width="1"/></g></svg>
<svg style="left:319px;top:74px" width="22" height="24" viewBox="0 0 22 24"><g transform="translate(0,1)" fill="#e6e6e6" stroke="#e6e6e6" opacity="0.7"><rect x="2.7" y="2.6" width="7.6" height="1.500" rx=".7" stroke="none"/><rect x="2.7" y="9.2" width="7.6" height="1.500" rx=".7" stroke="none"/><rect x="2.7" y="16" width="7.6" height="1.500" rx=".7" stroke="none"/><rect x="2.7" y="12.6" width="10.6" height="1.500" rx=".7" stroke="none"/><path d="M16 17V12" fill="none" stroke-width="1.100"/><path d="M13.200 13.200L16 9.600L18.800 13.200Z" stroke="none"/><rect x="2.700" y="5.400" width="16.800" height="2.600" fill="#d8d8d8" stroke-width="1"/></g><g fill="#a6a6a6" stroke="#a6a6a6"><rect x="2.7" y="2.6" width="7.6" height="1.500" rx=".7" stroke="none"/><rect x="2.7" y="9.2" width="7.6" height="1.500" rx=".7" stroke="none"/><rect x="2.7" y="16" width="7.6" height="1.500" rx=".7" stroke="none"/><rect x="2.7" y="12.6" width="10.6" height="1.500" rx=".7" stroke="none"/><path d="M16 17V12" fill="none" stroke-width="1.100"/><path d="M13.200 13.200L16 9.600L18.800 13.200Z" stroke="none"/><rect x="2.700" y="5.400" width="16.800" height="2.600" fill="#d8d8d8" stroke-width="1"/></g></svg>
<svg style="left:351px;top:74px" width="22" height="24" viewBox="0 0 22 24"><g transform="translate(0,1)" fill="#e6e6e6" stroke="#e6e6e6" opacity="0.7"><path d="M16.500 19V8" fill="none" stroke-width="1.200"/><path d="M13.600 11L16.500 6.400L19.400 11Z" stroke="none"/><rect x="2.7" y="6.4" width="7.6" height="1.500" rx=".7" stroke="none"/><rect x="2.7" y="9.7" width="7.6" height="1.500" rx=".7" stroke="none"/><rect x="2.7" y="13" width="7.6" height="1.500" rx=".7" stroke="none"/><rect x="2.7" y="16.3" width="7.6" height="1.500" rx=".7" stroke="none"/><rect x="2.700" y="2.600" width="16.800" height="2.400" fill="#e4e4e4" stroke-width="1"/></g><g fill="#a6a6a6" stroke="#a6a6a6"><path d="M16.500 19V8" fill="none" stroke-width="1.200"/><path d="M13.600 11L16.500 6.400L19.400 11Z" stroke="none"/><rect x="2.7" y="6.4" width="7.6" height="1.500" rx=".7" stroke="none"/><rect x="2.7" y="9.7" width="7.6" height="1.500" rx=".7" stroke="none"/><rect x="2.7" y="13" width="7.6" height="1.500" rx=".7" stroke="none"/><rect x="2.7" y="16.3" width="7.6" height="1.500" rx=".7" stroke="none"/><rect x="2.700" y="2.600" width="16.800" height="2.400" fill="#e4e4e4" stroke-width="1"/></g></svg>
<style>
.lab{position:absolute;top:78px;font-size:11.3px;line-height:16px;color:#a9a9a9;white-space:nowrap;text-shadow:0 1px 0 #e4e4e4}
.ent{position:absolute;top:74px;height:21px;border:1px solid #bcbcbc;border-radius:3px;background:#dadada;box-shadow:0 1px 0 #e6e6e6}
.ent span{position:absolute;left:3.5px;top:3px;font-size:10.6px;line-height:16px;color:#a8a8a8}
.ent i{position:absolute;right:10px;top:0;width:1px;height:21px;background:#c6c6c6}
.ent b{position:absolute;right:2.5px;width:0;height:0;border-left:2.5px solid transparent;border-right:2.5px solid transparent}
.ent b.u{top:3px;border-bottom:5px solid #b4b4b4}
.ent b.d{top:13px;border-top:5px solid #b4b4b4}
.pbtn{position:absolute;background:#b9b9b9;border:1px solid #a2a2a2;border-radius:4px;box-shadow:inset 0 1px 1px #acacac,0 1px 0 #e0e0e0}
</style>
<div class="lab" style="left:398px">X :</div><div class="ent" style="left:415.5px;width:55px"><span>259,500</span><i></i><b class="u"></b><b class="d"></b></div>
<div class="lab" style="left:481px">Y :</div><div class="ent" style="left:498.5px;width:55px"><span>259,500</span><i></i><b class="u"></b><b class="d"></b></div>
<div class="lab" style="left:564.5px">L :</div><div class="ent" style="left:580.5px;width:55px"><span>241,000</span><i></i><b class="u"></b><b class="d"></b></div>
<div class="lab" style="left:678px">H :</div><div class="ent" style="left:696.5px;width:54px"><span>181,000</span><i></i><b class="u"></b><b class="d"></b></div>
<svg style="left:647px;top:76px" width="14" height="16" viewBox="0 0 14 16"><path d="M3.300 7V5Q3.300 2.600 5.600 2.600Q7.600 2.600 7.900 4.400" fill="none" stroke="#111" stroke-width="1.200"/><rect x="4.600" y="6.500" width="7.400" height="6.500" rx=".8" fill="#f6f0d8" stroke="#111" stroke-width="1.100"/><rect x="5.400" y="9.600" width="5.800" height="2.700" fill="#f0c040"/></svg>
<div class="abs" style="left:756px;top:72.500px;width:40px;height:23px;border:1px solid #a4a4a4;border-radius:3px;background:linear-gradient(#fbfbfb,#e4e4e4);box-shadow:0 1px 0 #e8e8e8"><span style="position:absolute;left:4px;top:3.500px;font-size:11.500px;line-height:16px;color:#1a1a1a">px</span><span style="position:absolute;left:25.600px;top:9px;width:0;height:0;border-left:4.800px solid transparent;border-right:4.800px solid transparent;border-top:5.600px solid #111"></span></div>
<div class="pbtn" style="left:844px;top:69px;width:28px;height:30px"></div><div class="pbtn" style="left:876px;top:69px;width:28px;height:30px"></div><div class="pbtn" style="left:908px;top:69px;width:28px;height:30px"></div>
<svg style="left:817px;top:76px" width="20" height="16" viewBox="0 0 20 16"><path d="M4 3.800H15.600V9" fill="none" stroke="#000" stroke-width="1.800"/><path d="M4 6.600H12.600V9" fill="none" stroke="#000" stroke-width="1"/><path d="M4.500 11.600H10.500" stroke="#000" stroke-width="1.200" stroke-dasharray="1.300 1"/><path d="M10.400 8.800L15 11.600L10.400 14.400Z" fill="#000"/></svg>
<svg style="left:849px;top:76px" width="20" height="16" viewBox="0 0 20 16"><path d="M3.600 3.800H9.500Q15 3.800 15 9" fill="none" stroke="#000" stroke-width="1.600"/><path d="M3.600 6.600H9Q12 6.600 12 9.400" fill="none" stroke="#000" stroke-width="1"/><path d="M4.500 11.600H10.500" stroke="#000" stroke-width="1.200" stroke-dasharray="1.300 1"/><path d="M10.400 8.800L15 11.600L10.400 14.400Z" fill="#000"/></svg>
<svg style="left:881px;top:76px" width="20" height="16" viewBox="0 0 20 16"><rect x="4.500" y="4.600" width="10.500" height="4.600" fill="url(#lbv)"/><path d="M4 3.800H15.600V9" fill="none" stroke="#000" stroke-width="1.800"/><path d="M4.500 6.400H12.600V9" fill="none" stroke="#4a6a9a" stroke-width=".9"/><path d="M4.500 11.600H10.500" stroke="#000" stroke-width="1.200" stroke-dasharray="1.300 1"/><path d="M10.400 8.800L15 11.600L10.400 14.400Z" fill="#000"/></svg>
<svg style="left:913px;top:76px" width="20" height="16" viewBox="0 0 20 16"><path d="M4 3.800H15.600V9" fill="none" stroke="#000" stroke-width="1.800"/><path d="M4.500 6.800H14.500" stroke="#000" stroke-width="2.400" stroke-dasharray="1.600 1.300"/><path d="M4.500 11.600H10.500" stroke="#000" stroke-width="1.200" stroke-dasharray="1.300 1"/><path d="M10.400 8.800L15 11.600L10.400 14.400Z" fill="#000"/></svg>
<div class="pbtn" style="left:3px;top:111px;width:28px;height:30px;border-radius:4px"></div>
<svg style="left:0;top:106px" width="40" height="700" viewBox="0 106 40 700"><defs>
<linearGradient id="twk" x1="0" y1="0" x2="0" y2="1"><stop offset="0" stop-color="#555"/><stop offset=".5" stop-color="#8a8a8a"/><stop offset="1" stop-color="#d0d0d0"/></linearGradient>
<linearGradient id="hnd" x1="0" y1="0" x2="1" y2="1"><stop offset="0" stop-color="#ffd070"/><stop offset="1" stop-color="#e08a00"/></linearGradient>
<linearGradient id="box3" x1="0" y1="0" x2="1" y2="1"><stop offset="0" stop-color="#9aa2d8"/><stop offset="1" stop-color="#343a8a"/></linearGradient>
<linearGradient id="pst" x1="0" y1="0" x2="1" y2="1"><stop offset="0" stop-color="#fff2dc"/><stop offset="1" stop-color="#f6d9a8"/></linearGradient>
<linearGradient id="can" x1="0" y1="0" x2="1" y2="0"><stop offset="0" stop-color="#2f8a2a"/><stop offset=".6" stop-color="#7ad070"/><stop offset="1" stop-color="#2a7a26"/></linearGradient>
<linearGradient id="bkt" x1="0" y1="0" x2="1" y2="1"><stop offset="0" stop-color="#a8c8e8"/><stop offset="1" stop-color="#2a5a98"/></linearGradient>
<linearGradient id="grd" x1="0" y1="0" x2="1" y2="1"><stop offset="0" stop-color="#3e9e44"/><stop offset=".55" stop-color="#d8eeda"/><stop offset="1" stop-color="#69b86d"/></linearGradient>
<linearGradient id="penb" x1="0" y1="0" x2="1" y2="1"><stop offset="0" stop-color="#a8d0f4"/><stop offset="1" stop-color="#1a4f94"/></linearGradient>
</defs><path d="M11.500 116.400V134.800L15.300 131.600L18.600 137.300L21.900 135.600L18.600 130.100L23.400 129.300Z" fill="#000" stroke="#fff" stroke-width="1.100" stroke-linejoin="round"/><path d="M27 151.400Q13 151.500 12.300 156Q8.800 160 8.500 170" fill="none" stroke="#555" stroke-width="1"/><rect x="9.700" y="152.500" width="5.400" height="5.400" fill="#8c8cb8" stroke="#1010f0" stroke-width="1.600"/><rect x="25.700" y="149.800" width="3.400" height="3.400" fill="#b8b8ff" stroke="#4040ff" stroke-width="1"/><rect x="6.700" y="168.500" width="3.400" height="3.400" fill="#b8b8ff" stroke="#4040ff" stroke-width="1"/><path d="M14.200 158.200L27.600 166.200L22.600 171.400Z" fill="#000" stroke="#eee" stroke-width=".5"/><defs><linearGradient id="twk2" gradientUnits="userSpaceOnUse" x1="0" y1="184" x2="0" y2="206"><stop offset="0" stop-color="#f4f4f4"/><stop offset=".5" stop-color="#e2e2e2"/><stop offset=".58" stop-color="#666"/><stop offset="1" stop-color="#e0e0e0"/></linearGradient></defs><path d="M7.300 205.800V197.400H9.800C13.400 196.600 13.300 191 16.600 187.200C19.800 184 25.600 184.300 25.900 188.500C26 191.500 22.900 191.900 22.700 190.100C22.700 189 24 189 24.100 189.900C23.500 187 20.300 187.300 19.900 190.800C19.700 194.500 23 197 26 197.400H28.800V205.800Z" fill="url(#twk2)"/><path d="M7.300 197.400H9.800C13.400 196.600 13.300 191 16.600 187.200C19.800 184 25.600 184.300 25.900 188.500C26 191.500 22.900 191.900 22.700 190.100C22.700 189 24 189 24.100 189.900C23.500 187 20.300 187.300 19.900 190.800C19.700 194.500 23 197 26 197.400H28.800" fill="none" stroke="#222" stroke-width="1.300" stroke-linejoin="round"/><path d="M19.500 230.500L27 238" stroke="#111" stroke-width="4.600" stroke-linecap="round"/><path d="M21.700 232.700L27 238" stroke="url(#hnd)" stroke-width="3" stroke-linecap="round"/><circle cx="14" cy="224.800" r="7.400" fill="url(#lb)" stroke="#111" stroke-width="1.500"/><path d="M9.500 222.500Q11.500 219 15.500 219.500" fill="none" stroke="#fff" stroke-width="1.300" opacity=".9"/><path d="M6.300 257.700L16.200 251.300L26 268.200L16.200 274.500Z" fill="url(#pk)" stroke="#111" stroke-width="1.200"/><path d="M8.500 259.800L11.200 258M10 262.300L12 261M11.500 264.800L14.200 263M13 267.300L15 266M14.500 269.800L17.200 268M16 272.300L18 271" stroke="#111" stroke-width="1"/><rect x="8.500" y="287.300" width="18.800" height="18.800" fill="url(#lb)" stroke="#000" stroke-width="1.400"/><path d="M8.400 323.800L19 318.900L28.100 325.900V336.500L16.900 342.100L8.400 335.800Z" fill="#e4e8f8" stroke="#222" stroke-width="1.200" stroke-linejoin="round"/><path d="M9.300 324.400L18.500 321.500V333L9.300 335.300Z" fill="#aab0de"/><path d="M18.500 321.500L27.200 326.300V336L18.500 333Z" fill="#eef2fc"/><path d="M9.300 335.300L18.500 333L27.200 336L17 341Z" fill="url(#box3)"/><circle cx="18" cy="364.600" r="9.400" fill="url(#pk)" stroke="#000" stroke-width="1.300"/><path d="M6.300 394.100L14.100 388.400L22.500 392.700L19.700 403.200L9.900 403.900Z" fill="url(#pst)" stroke="#222" stroke-width="1"/><path d="M21.800 392.400L23.900 398.200L29.800 399.500L25.200 403.300L25.600 409.700L20.400 406.300L14.200 408L16.200 402.200L13 397.400L19 397.500Z" fill="url(#yl)" stroke="#222" stroke-width="1"/><path d="M15.6 434.3 L15.7 434.2 L15.8 434.0 L15.9 433.8 L16.1 433.6 L16.3 433.5 L16.6 433.5 L16.9 433.4 L17.2 433.5 L17.5 433.6 L17.8 433.7 L18.1 434.0 L18.4 434.3 L18.6 434.6 L18.7 435.0 L18.7 435.5 L18.7 435.9 L18.6 436.4 L18.4 436.9 L18.1 437.3 L17.7 437.7 L17.2 438.0 L16.7 438.3 L16.1 438.4 L15.5 438.5 L14.8 438.4 L14.2 438.2 L13.6 437.9 L13.0 437.5 L12.5 437.0 L12.0 436.4 L11.7 435.7 L11.5 434.9 L11.5 434.1 L11.6 433.3 L11.8 432.5 L12.2 431.7 L12.7 431.0 L13.4 430.4 L14.1 429.9 L15.0 429.5 L16.0 429.3 L17.0 429.2 L18.0 429.3 L19.0 429.6 L20.0 430.0 L20.8 430.6 L21.6 431.4 L22.3 432.3 L22.7 433.3 L23.0 434.4 L23.1 435.6 L23.0 436.8 L22.7 437.9 L22.2 439.0 L21.5 440.1 L20.6 441.0 L19.5 441.7 L18.3 442.3 L17.0 442.6 L15.6 442.8 L14.2 442.7 L12.9 442.4 L11.6 441.8 L10.3 441.0 L9.3 440.0 L8.4 438.8 L7.7 437.5 L7.2 436.1 L7.1 434.6 L7.1 433.0 L7.5 431.5 L8.1 430.0 L9.0 428.7 L10.1 427.4 L11.4 426.4 L12.9 425.6 L14.5 425.1 L16.3 424.9 L18.0 424.9 L19.8 425.2 L21.5 425.9 L23.0 426.8 L24.4 428.0 L25.6 429.4 L26.6 431.0 L27.2 432.8 L27.5 434.6 L27.5 436.5 L27.2 438.4 L26.5 440.3 L27.4 442.6" fill="none" stroke="#111" stroke-width="1.200" stroke-linejoin="round"/><path d="M7.500 457H11.500L8 465.500C11 464.500 14.500 466 14.600 469C14.500 472 13 475 15.500 477.500C19 479.500 25.500 476.500 26.500 471.500" fill="none" stroke="#111" stroke-width="1.100"/><path d="M22.300 455.500L27.600 461.500L23.800 471.200L18 466.500Z" fill="#f7c613" stroke="#8a5a00" stroke-width=".6"/><path d="M24.500 458L27.600 461.500L23.800 471.200L21 468.800Z" fill="#f08a1c"/><path d="M18 466.500L23.800 471.200L17.500 476Z" fill="#fff" stroke="#333" stroke-width=".7"/><path d="M17.500 476L18 473.300L19.600 474.500Z" fill="#000"/><path d="M7.500 490.700H18C17.500 498 13 503 13.600 507.500C14 509.500 15 510.800 16.500 511.200" fill="none" stroke="#222" stroke-width="1"/><path d="M10 511H16.500" stroke="#111" stroke-width="1"/><rect x="6.500" y="508.600" width="3.600" height="3.600" fill="#fff" stroke="#000" stroke-width="1"/><rect x="16.300" y="510" width="2.600" height="2.600" fill="#fff" stroke="#000" stroke-width=".9"/><path d="M22 500.500L24.300 502.300L19.200 509.500L18.200 508.800Z" fill="#e8e8e8" stroke="#111" stroke-width=".8"/><path d="M20.700 498.300L25.600 502.300L24.300 504.200L20 500.800Z" fill="#f0a800" stroke="#333" stroke-width=".6"/><path d="M23 490L29.500 494.600L25.800 502.200L20.500 498.200Z" fill="url(#penb)" stroke="#123" stroke-width=".7"/><path d="M6.300 524.200C11 522.300 16 524 14.300 530.500C12.800 536 12 541.500 15 544.300C19.500 545.500 23 540.500 28.900 543.800C24 543.200 21 549.800 14 548.400C5.500 546.300 5 538 7.800 531.500C9.300 527.500 9.500 525 6.300 524.200Z" fill="#000"/><path d="M21 527.800L26.500 532L23 538.800L17 543.500L17.300 536Z" fill="#f6c020" stroke="#222" stroke-width=".9"/><path d="M21.500 533L17.800 541.500" stroke="#000" stroke-width="1"/><circle cx="21.400" cy="533.300" r="1" fill="#000"/><path d="M22.800 523.800L29.800 526.500L27 532.200L21 528Z" fill="#3a6eb0" stroke="#123" stroke-width=".6"/><path d="M21.600 527L27.200 531L26.500 532.300L21 528.300Z" fill="#d01818"/><g opacity=".999"><text x="6.300" y="577.700" font-family="Liberation Sans,DejaVu Sans,sans-serif" font-weight="bold" font-size="26" fill="#000" textLength="19.500" lengthAdjust="spacingAndGlyphs">A</text></g><path d="M25 558.400H28.600M25 580.400H28.600M26.800 558.400V580.400" stroke="#fff" stroke-width="2.200"/><path d="M25 558.400H28.600M25 580.400H28.600M26.800 558.400V580.400" stroke="#000" stroke-width="1"/><path d="M18 601.500Q18 599.500 20 599.500H27Q29 599.500 29 601.500V612.500Q23.500 614.500 18 611.500Z" fill="url(#can)" stroke="#1d4d1a" stroke-width=".8"/><rect x="19.500" y="596.200" width="6.600" height="3.400" rx="1" fill="#f4f4f4" stroke="#222" stroke-width=".8"/><rect x="18.500" y="593.800" width="3.600" height="2.800" fill="#222"/><g fill="#111"><circle cx="9" cy="594" r="1"/><circle cx="12.500" cy="595.200" r=".9"/><circle cx="8.300" cy="598.200" r="1.100"/><circle cx="12" cy="598.700" r=".8"/><circle cx="15" cy="597.500" r=".8"/><circle cx="10.500" cy="602.300" r="1.100"/><circle cx="14" cy="601" r=".8"/><circle cx="16" cy="599.500" r=".7"/></g><path d="M18.300 625.500L26.700 631.100L17.600 647.300L7.700 641.700Z" fill="url(#pk)" stroke="#111" stroke-width="1.200"/><ellipse cx="16.200" cy="680.400" rx="10" ry="2.300" fill="#a4dca0" stroke="#2e7a2c" stroke-width=".9"/><path d="M10.500 668C11.500 673 13 677.500 13.200 680.500H16.500C16 677 15 672 14.500 668Z" fill="#8ed08a" stroke="#2e7a2c" stroke-width=".7"/><path d="M9.900 665.500L24.600 659.200L28.900 668.300Q24 674.500 15.500 676Z" fill="url(#bkt)" stroke="#14243c" stroke-width="1"/><ellipse cx="12.300" cy="670.700" rx="2.400" ry="5.800" transform="rotate(-24 12.300 670.700)" fill="#7cc878" stroke="#14243c" stroke-width=".9"/><path d="M14 659.500L17.200 669" stroke="#222" stroke-width="1"/><circle cx="17.300" cy="669.300" r="1.100" fill="#ddd" stroke="#222" stroke-width=".6"/><rect x="7.300" y="694.500" width="21.400" height="21" fill="url(#grd)" stroke="#c4e4c6" stroke-width=".8"/><path d="M11.500 699.500L24 710.500" stroke="#111" stroke-width="1.300"/><rect x="9.700" y="697.700" width="3.600" height="3.600" fill="#fff" stroke="#111" stroke-width="1.100"/><rect x="22.200" y="708.700" width="3.600" height="3.600" fill="#fff" stroke="#111" stroke-width="1.100"/><path d="M23.200 733.200L12.600 745.300L11.800 747.200L13.800 746.500L24.800 734.800Z" fill="#9cc0e6" stroke="#111" stroke-width=".9"/><path d="M20.300 733.300L25.600 738" stroke="#000" stroke-width="2.600" stroke-linecap="round"/><path d="M23.500 734.500L27.500 729.800" stroke="#000" stroke-width="5.200" stroke-linecap="round"/><path d="M11.300 747.500Q9.600 750 11.300 750.800Q13 750 11.300 747.500Z" fill="#7aa6dc" stroke="#234" stroke-width=".6"/><path d="M19 765H25.600V777.400M13 768.200L10 777.400" fill="none" stroke="#000" stroke-width="1"/><g stroke="#000" stroke-width="1.100"><rect x="11.500" y="762" width="7.400" height="6.400" fill="url(#lb)"/><rect x="6.500" y="777.600" width="7.400" height="6.600" fill="url(#lb)"/><rect x="21.400" y="777.600" width="7.800" height="6.600" fill="url(#lb)"/><rect x="14.800" y="770.400" width="7.600" height="4.200" fill="#f6c626"/></g></svg>
<svg style="left:1020px;top:108px" width="22" height="22" viewBox="0 0 22 22"><circle cx="8.900" cy="8.500" r="4.700" fill="none" stroke="#111" stroke-width="1.100"/><path d="M12.300 12L17.400 17" stroke="#111" stroke-width="1.300" stroke-linecap="round"/><g opacity=".999"><text x="6.700" y="11.300" font-family="Liberation Sans,DejaVu Sans,sans-serif" font-weight="bold" font-size="8" fill="#111">1</text></g></svg>
<div class="abs" style="left:1024px;top:132px;width:14px;height:779px;background:linear-gradient(90deg,#c9c9c9,#dedede 30%,#f4f4f4);border-left:1px solid #ababab;box-sizing:border-box"></div><div class="abs" style="left:1026px;top:394px;width:10.500px;height:258px;border:1px solid #9c9c9c;border-radius:6px;background:linear-gradient(90deg,#e9e9e9,#d6d6d6 60%,#cdcdcd);box-sizing:border-box"></div>
<div class="abs" style="left:54px;top:915px;width:965px;height:14px;background:linear-gradient(#c9c9c9,#dedede 30%,#f4f4f4);border-top:1px solid #ababab;box-sizing:border-box"></div><div class="abs" style="left:346px;top:917px;width:392px;height:10.500px;border:1px solid #9c9c9c;border-radius:6px;background:linear-gradient(#ececec,#d8d8d8 60%,#cfcfcf);box-sizing:border-box"></div>
<svg style="left:1022px;top:913px" width="16" height="18" viewBox="0 0 16 18"><path d="M4 3.600Q3.300 2.700 4.600 3.200L12.800 9.600Q13.600 10.300 12.600 10.800L6.600 14.300Q5.600 14.800 5.300 13.600Z" fill="#b7b7b7" stroke="#c6c6c6" stroke-width=".8"/></svg>
<div class="abs" style="left:0;top:933px;width:1067px;height:18px;background:#8e8e8e"></div><div class="abs" style="left:0;top:934px;width:1067px;height:16px;overflow:hidden;white-space:nowrap;font-size:0"><svg style="position:static;display:inline-block;vertical-align:top" width="15" height="16" viewBox="0 0 15 16"><rect width="15" height="16" fill="#fff"/><path d="M0.500 0.500L14.500 15.500M14.500 0.500L0.500 15.500" stroke="#8a1a10" stroke-width="1.500"/></svg><span style="display:inline-block;width:16px;height:16px;background:#000000"></span><span style="display:inline-block;width:16px;height:16px;background:#1a1a1a"></span><span style="display:inline-block;width:16px;height:16px;background:#333333"></span><span style="display:inline-block;width:16px;height:16px;background:#4d4d4d"></span><span style="display:inline-block;width:16px;height:16px;background:#666666"></span><span style="display:inline-block;width:16px;height:16px;background:#808080"></span><span style="display:inline-block;width:16px;height:16px;background:#999999"></span><span style="display:inline-block;width:16px;height:16px;background:#b3b3b3"></span><span style="display:inline-block;width:16px;height:16px;background:#cccccc"></span><span style="display:inline-block;width:16px;height:16px;background:#e6e6e6"></span><span style="display:inline-block;width:16px;height:16px;background:#ececec"></span><span style="display:inline-block;width:16px;height:16px;background:#f2f2f2"></span><span style="display:inline-block;width:16px;height:16px;background:#f9f9f9"></span><span style="display:inline-block;width:16px;height:16px;background:#ffffff"></span><span style="display:inline-block;width:16px;height:16px;background:#800000"></span><span style="display:inline-block;width:16px;height:16px;background:#ff0000"></span><span style="display:inline-block;width:16px;height:16px;background:#808000"></span><span style="display:inline-block;width:16px;height:16px;background:#ffff00"></span><span style="display:inline-block;width:16px;height:16px;background:#008000"></span><span style="display:inline-block;width:16px;height:16px;background:#00ff00"></span><span style="display:inline-block;width:16px;height:16px;background:#008080"></span><span style="display:inline-block;width:16px;height:16px;background:#00ffff"></span><span style="display:inline-block;width:16px;height:16px;background:#000080"></span><span style="display:inline-block;width:16px;height:16px;background:#0000ff"></span><span style="display:inline-block;width:16px;height:16px;background:#800080"></span><span style="display:inline-block;width:16px;height:16px;background:#ff00ff"></span><span style="display:inline-block;width:16px;height:16px;background:#2b0000"></span><span style="display:inline-block;width:16px;height:16px;background:#550000"></span><span style="display:inline-block;width:16px;height:16px;background:#800000"></span><span style="display:inline-block;width:16px;height:16px;background:#aa0000"></span><span style="display:inline-block;width:16px;height:16px;background:#d40000"></span><span style="display:inline-block;width:16px;height:16px;background:#ff0000"></span><span style="display:inline-block;width:16px;height:16px;background:#ff2a2a"></span><span style="display:inline-block;width:16px;height:16px;background:#ff5555"></span><span style="display:inline-block;width:16px;height:16px;background:#ff8080"></span><span style="display:inline-block;width:16px;height:16px;background:#ffaaaa"></span><span style="display:inline-block;width:16px;height:16px;background:#ffd5d5"></span><span style="display:inline-block;width:16px;height:16px;background:#280b0b"></span><span style="display:inline-block;width:16px;height:16px;background:#501616"></span><span style="display:inline-block;width:16px;height:16px;background:#782121"></span><span style="display:inline-block;width:16px;height:16px;background:#a02c2c"></span><span style="display:inline-block;width:16px;height:16px;background:#c83737"></span><span style="display:inline-block;width:16px;height:16px;background:#d35f5f"></span><span style="display:inline-block;width:16px;height:16px;background:#de8787"></span><span style="display:inline-block;width:16px;height:16px;background:#e9afaf"></span><span style="display:inline-block;width:16px;height:16px;background:#f4d7d7"></span><span style="display:inline-block;width:16px;height:16px;background:#241c1c"></span><span style="display:inline-block;width:16px;height:16px;background:#483737"></span><span style="display:inline-block;width:16px;height:16px;background:#6c5353"></span><span style="display:inline-block;width:16px;height:16px;background:#916f6f"></span><span style="display:inline-block;width:16px;height:16px;background:#ac9393"></span><span style="display:inline-block;width:16px;height:16px;background:#c8b7b7"></span><span style="display:inline-block;width:16px;height:16px;background:#e3dbdb"></span><span style="display:inline-block;width:16px;height:16px;background:#2b1100"></span><span style="display:inline-block;width:16px;height:16px;background:#552200"></span><span style="display:inline-block;width:16px;height:16px;background:#803300"></span><span style="display:inline-block;width:16px;height:16px;background:#aa4400"></span><span style="display:inline-block;width:16px;height:16px;background:#d45500"></span><span style="display:inline-block;width:16px;height:16px;background:#ff6600"></span><span style="display:inline-block;width:16px;height:16px;background:#ff7f2a"></span><span style="display:inline-block;width:16px;height:16px;background:#ff9955"></span><span style="display:inline-block;width:16px;height:16px;background:#ffb380"></span><span style="display:inline-block;width:16px;height:16px;background:#ffccaa"></span><span style="display:inline-block;width:16px;height:16px;background:#ffe6d5"></span><span style="display:inline-block;width:16px;height:16px;background:#28170b"></span><span style="display:inline-block;width:16px;height:16px;background:#502d16"></span></div>
<svg style="left:1068px;top:932px" width="11" height="14" viewBox="0 0 11 14"><path d="M10.500 1V13L2.500 7Z" fill="#222"/></svg>
<div class="abs" style="left:0;top:952px;width:1068px;height:14px;background:linear-gradient(#c9c9c9,#dadada 25%,#f2f2f2);border-top:1px solid #b4b4b4;box-sizing:border-box"></div><div class="abs" style="left:0;top:954px;width:162px;height:10.500px;border:1px solid #9c9c9c;border-radius:6px;background:linear-gradient(#ececec,#d8d8d8 60%,#cfcfcf);box-sizing:border-box"></div>
<style>
.st{position:absolute;font-size:10.800px;line-height:14px;color:#1c1c28;white-space:nowrap}
.mono{font-family:"DejaVu Sans Mono","Liberation Mono",monospace;font-size:10.200px}
</style>
<div class="st" style="left:1px;top:967.800px">Remplissage :</div><div class="st" style="left:1px;top:981.700px">Contour :</div><div class="st" style="left:85px;top:967.800px">N/A</div><div class="st" style="left:85px;top:981.700px">N/A</div><div class="st" style="left:122px;top:975px">O :</div><div class="ent" style="left:140px;top:970.500px;width:43px;height:19.500px;background:#dcdcdc"><span style="top:2.500px">0</span><i style="height:19.500px"></i><b class="u" style="top:3px"></b><b class="d" style="top:12px"></b></div><div class="abs" style="left:189px;top:966px;width:1px;height:29px;background:#b4b4b4;box-shadow:1px 0 0 #e4e4e4"></div><svg style="left:195px;top:972px" width="14" height="14" viewBox="0 0 14 14"><path d="M1 8.300Q7 3 13 8.300Q7 13.400 1 8.300Z" fill="#fff" stroke="#111" stroke-width="1.400"/><circle cx="7" cy="8.200" r="2.700" fill="#111"/><path d="M2.500 5.300L1.300 4M4.600 4.200L4 2.900M7 3.800V2.500M9.400 4.200L10 2.900M11.500 5.300L12.700 4" stroke="#111" stroke-width="1.200"/></svg>
<svg style="left:218px;top:973px" width="12" height="14" viewBox="0 0 12 14"><path d="M2.200 6V4.300Q2.200 2 4.500 2Q6.500 2 6.900 3.800" fill="none" stroke="#111" stroke-width="1.300"/><rect x="3.300" y="5.800" width="7.200" height="6.400" rx=".8" fill="#f6efd4" stroke="#111" stroke-width="1.100"/><rect x="4.100" y="8.800" width="5.600" height="2.700" fill="#f0c040"/><rect x="6.300" y="7.800" width="1.200" height="2.400" fill="#111"/></svg>
<div class="abs" style="left:236.500px;top:968.500px;width:82.500px;height:24.500px;border:1px solid #9e9e9e;border-radius:3.500px;background:linear-gradient(#f8f8f8,#e6e6e6 60%,#dadada);box-sizing:border-box;box-shadow:0 1px 0 #e8e8e8"><span class="st" style="left:10.500px;top:3.800px;font-weight:bold;font-size:10.300px">•Vues</span><span style="position:absolute;left:67.300px;top:8.300px;width:0;height:0;border-left:4px solid transparent;border-right:4px solid transparent;border-top:5px solid #111"></span></div><div class="st" id="stmsg" style="left:326px;top:973px;font-size:12.150px;line-height:16px">Aucun objet sélectionné. Sélectionnez des objets par Clic, Maj+Clic ou Alt+molette, ou cliquez-déplacez aut..</div><div class="abs" style="left:923px;top:966px;width:1px;height:29px;background:#b4b4b4;box-shadow:1px 0 0 #e4e4e4"></div><div class="st mono" style="left:926px;top:966.500px;word-spacing:-3.500px">X :</div><div class="st mono" style="left:926px;top:980.300px;word-spacing:-3.500px">Y :</div><div class="st mono" style="left:940px;top:966.500px;width:42.500px;text-align:right">1208,57</div><div class="st mono" style="left:940px;top:980.300px;width:42.500px;text-align:right">458,57</div><div class="st mono" style="left:990px;top:974.500px;word-spacing:-3.500px">Z :</div><div class="abs" style="left:1005.500px;top:969.500px;width:53px;height:22.500px;border:1px solid #9c9c9c;border-radius:3.500px;background:#f7f7f7;box-sizing:border-box"><span class="st" style="left:10.500px;top:3.500px;font-size:10.600px">70%</span><i style="position:absolute;left:41px;top:0;width:1px;height:20.500px;background:#b8b8b8"></i><span style="position:absolute;left:42px;top:0;width:10px;height:20.500px;background:#dedede;border-radius:0 3px 3px 0"></span><span style="position:absolute;left:44.500px;top:3.500px;width:0;height:0;border-left:3px solid transparent;border-right:3px solid transparent;border-bottom:5px solid #444"></span><span style="position:absolute;left:44.500px;top:14px;width:0;height:0;border-left:3px solid transparent;border-right:3px solid transparent;border-top:5px solid #444"></span></div>
<div class="pbtn" style="left:1049px;top:111px;width:24px;height:25.5px;border-radius:4px"></div><div class="pbtn" style="left:1049px;top:315px;width:24px;height:25.5px;border-radius:4px"></div><div class="pbtn" style="left:1049px;top:507px;width:24px;height:25.8px;border-radius:4px"></div><div class="pbtn" style="left:1049px;top:669px;width:24px;height:25.3px;border-radius:4px"></div><div class="pbtn" style="left:1049px;top:699.3px;width:24px;height:25.3px;border-radius:4px"></div>
<svg style="left:1042px;top:106px" width="37" height="640" viewBox="1042 106 37 640"><path d="M1057.500 120.9 L1064.600 128" stroke="#000" stroke-width="1.300"/><path d="M1066 129.4 L1061.200 128.2 L1064.600 124.8 Z" fill="#000"/><path d="M1055.700 116.1 l3 3 l-3 3 l-3 -3 Z" fill="#b4b4f4" stroke="#1414f0" stroke-width="1.200"/><path d="M1067.100 127.6 l3 3 l-3 3 l-3 -3 Z" fill="#b4b4e4" stroke="#0a8a0a" stroke-width="1.200"/><path d="M1053 145.5 H1069" stroke="#b6b6b6" stroke-width="1"/><path d="M1053 146.5 H1069" stroke="#e6e6e6" stroke-width="1"/><path d="M1057.500 162.7 L1064.600 170.1" stroke="#000" stroke-width="1.300"/><path d="M1066 171.5 L1061.200 170.3 L1064.600 166.9 Z" fill="#000"/><path d="M1055.700 157.9 l3 3 l-3 3 l-3 -3 Z" fill="#b4b4f4" stroke="#1414f0" stroke-width="1.200"/><path d="M1067.100 169.7 l3 3 l-3 3 l-3 -3 Z" fill="#b4b4e4" stroke="#0a8a0a" stroke-width="1.200"/><path d="M1068.500 189V203.500H1054" stroke="#a8a8a8" stroke-width="1" fill="none" stroke-dasharray="2 1.300"/><path d="M1067.500 219V230M1065 233.500H1053" stroke="#a8a8a8" stroke-width="1" fill="none" stroke-dasharray="2 1.300"/><path d="M1067.500 230.500l3 3l-3 3l-3 -3Z" fill="#d0d0d0" stroke="#a8a8a8" stroke-width=".9"/><path d="M1066.500 249V262.500H1053" stroke="#a8a8a8" stroke-width="1" fill="none" stroke-dasharray="2 1.300"/><ellipse cx="1066.500" cy="253.200" rx="2.300" ry="3" fill="#b0b0b0"/><path d="M1067.500 278.500V292.500H1054" stroke="#a8a8a8" stroke-width="1" fill="none" stroke-dasharray="2 1.300"/><circle cx="1057.700" cy="283.100" r="1.900" fill="#d8d8d8" stroke="#a8a8a8" stroke-width=".9"/><path d="M1053 307.5 H1069" stroke="#b6b6b6" stroke-width="1"/><path d="M1053 308.5 H1069" stroke="#e6e6e6" stroke-width="1"/><path d="M1057.500 324.7 L1064.600 331.7" stroke="#000" stroke-width="1.300"/><path d="M1066 333.1 L1061.200 331.9 L1064.600 328.5 Z" fill="#000"/><path d="M1055.700 319.9 l3 3 l-3 3 l-3 -3 Z" fill="#b4b4f4" stroke="#1414f0" stroke-width="1.200"/><path d="M1067.100 331.3 l3 3 l-3 3 l-3 -3 Z" fill="#b4b4e4" stroke="#0a8a0a" stroke-width="1.200"/><path d="M1054.100 351.300C1059.500 351.500 1064 354 1065 359C1065.400 362 1064 364.500 1062.100 365.900C1066 366 1070 363.500 1070.700 359.300" fill="none" stroke="#0a8a0a" stroke-width="1.400"/><path d="M1054.100 396.300L1070.600 380.500M1054.100 390.700L1070.600 386.700" stroke="#333" stroke-width="1"/><circle cx="1062.100" cy="388.400" r="2.200" fill="#8a8ad8" stroke="#0a8a0a" stroke-width="1.200"/><path d="M1053.300 410.300C1059 411 1064 413.500 1064.800 418C1065 421 1063.500 423.500 1062.900 424.500C1066 424 1069 422 1069.700 418.800" fill="none" stroke="#555" stroke-width="1"/><path d="M1061.300 421.400l3 3l-3 3l-3 -3Z" fill="#b4b4e4" stroke="#0a8a0a" stroke-width="1.200"/><path d="M1053.300 440.500C1057 441 1060 442.500 1062 444.500C1064.500 447.500 1064 451.500 1062.100 454.200C1066 453.800 1069 452 1069.700 449.400" fill="none" stroke="#555" stroke-width="1"/><rect x="1059.100" y="441.200" width="4.400" height="4.400" fill="#8a8ad8" stroke="#0a8a0a" stroke-width="1.200"/><path d="M1053.600 487.200L1070.200 471.900" stroke="#555" stroke-width="1"/><path d="M1056 486.500L1058.500 479.500M1058 487.500L1060.500 480.500M1065.800 478.300L1068.300 471.300M1067.800 479.300L1070.300 472.300" stroke="#e00000" stroke-width="1.200"/><circle cx="1061.800" cy="479.600" r="2.200" fill="#8a8ad8" stroke="#0a8a0a" stroke-width="1.200"/><path d="M1053 499.3 H1069" stroke="#b6b6b6" stroke-width="1"/><path d="M1053 500.3 H1069" stroke="#e6e6e6" stroke-width="1"/><path d="M1057.500 516.6 L1064.600 523.8" stroke="#000" stroke-width="1.300"/><path d="M1066 525.2 L1061.200 524 L1064.600 520.6 Z" fill="#000"/><path d="M1055.700 511.8 l3 3 l-3 3 l-3 -3 Z" fill="#b4b4f4" stroke="#1414f0" stroke-width="1.200"/><path d="M1067.100 523.4 l3 3 l-3 3 l-3 -3 Z" fill="#b4b4e4" stroke="#0a8a0a" stroke-width="1.200"/><path d="M1067.400 542.900V555.900H1052.900" fill="none" stroke="#777" stroke-width="1"/><circle cx="1058.900" cy="547.700" r="1.800" fill="#b8e0b8" stroke="#0a8a0a" stroke-width="1.100"/><path d="M1056 578H1062M1059 575V581" stroke="#000" stroke-width="1.100"/><path d="M1067.400 572.900V586.400" stroke="#000" stroke-width="1" stroke-dasharray="2 1.200"/><path d="M1054 586.400H1067.400" stroke="#000" stroke-width="1" stroke-dasharray="1 1"/><g opacity=".999"><text x="1056.500" y="615.300" font-family="Liberation Sans,DejaVu Sans,sans-serif" font-weight="bold" font-size="22" fill="#000" textLength="14.500" lengthAdjust="spacingAndGlyphs">A</text></g><path d="M1056 616.300L1070 614.600" stroke="#0a8a0a" stroke-width="1.100"/><path d="M1056 613.800l2.800 2.800l-2.800 2.800l-2.800 -2.800Z" fill="#b4d4b4" stroke="#0a8a0a" stroke-width="1.100"/><path d="M1053 631.5 H1069" stroke="#b6b6b6" stroke-width="1"/><path d="M1053 632.5 H1069" stroke="#e6e6e6" stroke-width="1"/><defs><linearGradient id="pgi" x1="0" y1="0" x2=".6" y2="1"><stop offset="0" stop-color="#fff"/><stop offset=".5" stop-color="#f2f2f2"/><stop offset="1" stop-color="#8c8c8c"/></linearGradient></defs><rect x="1055.500" y="645.500" width="12" height="16" fill="url(#pgi)" stroke="#000" stroke-width="1.100"/><path d="M1054.900 673.700V691.700M1059.400 673.700V691.700M1064.100 673.700V691.700M1068.900 673.700V691.700M1053.100 676.400H1071M1053.100 681.300H1071M1053.100 685.900H1071M1053.100 690.600H1071" stroke="#0a0aff" stroke-width="1.300"/><path d="M1053.900 704.300V721.700" stroke="#0a0aff" stroke-width="2"/><path d="M1059.400 721.700L1066.800 704.300M1067.600 704.300V721.700" stroke="#0a0aff" stroke-width="1.300"/></svg>
</body></html>
